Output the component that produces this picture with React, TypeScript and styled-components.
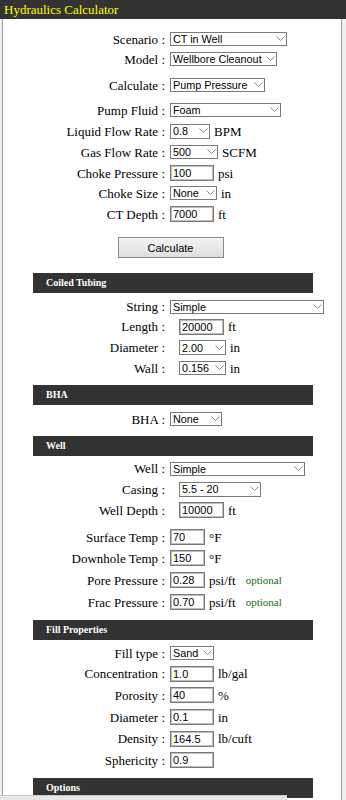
import React from 'react';
import styled, { createGlobalStyle } from 'styled-components';

const GlobalStyle = createGlobalStyle`
  html, body { margin: 0; padding: 0; background: #f0f0f0; }
  body { font-family: "Liberation Serif", "Times New Roman", serif; color: #000; }
`;

const Page = styled.div`
  width: 346px;
`;

const TitleBar = styled.div`
  height: 19px;
  box-sizing: border-box;
  background: #333333;
  color: #ffff00;
  font: 13px/19px "Liberation Serif", "Times New Roman", serif;
  padding-left: 4px;
  white-space: nowrap;
`;

const Panel = styled.div`
  margin-left: 2px;
  width: 340px;
  box-sizing: border-box;
  background: #ffffff;
  border-left: 1px solid #a0a0a0;
  border-right: 1px solid #a0a0a0;
  padding: 10px 0 40px;
  display: flex;
  flex-direction: column;
`;

const Row = styled.div<{ $h?: number; $mt?: number }>`
  display: grid;
  grid-template-columns: 162px auto;
  column-gap: 5px;
  align-items: center;
  height: ${(p) => p.$h ?? 21}px;
  margin-top: ${(p) => p.$mt ?? 0}px;
`;

const Label = styled.label`
  text-align: right;
  font-size: 13px;
  line-height: 15px;
  white-space: nowrap;
`;

const Controls = styled.div<{ $indent?: boolean }>`
  display: flex;
  align-items: center;
  padding-left: ${(p) => (p.$indent ? 9 : 0)}px;
  white-space: nowrap;
`;

const Unit = styled.span`
  margin-left: 4px;
  font-size: 13px;
  line-height: 15px;
`;

const Optional = styled.span`
  margin-left: 10px;
  font-size: 11px;
  line-height: 13px;
  color: #136b13;
`;

const SelectWrap = styled.span<{ $w: number; $h?: number }>`
  position: relative;
  display: inline-block;
  width: ${(p) => p.$w}px;
  height: ${(p) => p.$h ?? 14}px;
`;

const NativeSelect = styled.select`
  appearance: none;
  -webkit-appearance: none;
  display: block;
  width: 100%;
  height: 100%;
  box-sizing: border-box;
  margin: 0;
  border: 1px solid #7a7a7a;
  border-radius: 0;
  background: #ffffff;
  color: #000;
  font: 10.8px/12px "Liberation Sans", Arial, sans-serif;
  padding: 0 8px 0 2px;
  outline: none;
`;

const Chevron = styled.svg`
  position: absolute;
  right: 2px;
  top: 50%;
  margin-top: -3px;
  width: 9px;
  height: 5px;
  pointer-events: none;
`;

const TextInput = styled.input<{ $w?: number }>`
  width: ${(p) => p.$w ?? 44}px;
  height: 16px;
  box-sizing: border-box;
  margin: 0;
  border: 1px solid #7a7a7a;
  box-shadow: inset 0 0 0 1px #bdbdbd;
  border-radius: 0;
  padding: 0 2px;
  background: #fff;
  color: #000;
  font: 11px/12px "Liberation Sans", Arial, sans-serif;
  outline: none;
`;

const ButtonRow = styled.div`
  display: flex;
  justify-content: center;
  padding-right: 3px;
  margin-top: 13px;
`;

const Button = styled.button`
  width: 106px;
  height: 21px;
  box-sizing: border-box;
  margin: 0;
  border: 1px solid #8a8a8a;
  border-radius: 0;
  background: linear-gradient(#f3f3f3, #dedede);
  color: #000;
  font: 11px "Liberation Sans", Arial, sans-serif;
  padding: 0;
`;

const SectionBar = styled.div<{ $mt?: number }>`
  margin: ${(p) => p.$mt ?? 7}px 0 0 30px;
  width: 280px;
  height: 20px;
  box-sizing: border-box;
  background: #333333;
  color: #ffffff;
  font: bold 10px/20px "Liberation Serif", "Times New Roman", serif;
  padding-left: 13px;
`;

const ScrollThumb = styled.div`
  position: fixed;
  left: 0;
  bottom: 0;
  width: 287px;
  height: 4px;
  background: #e6e6e6;
  border-top: 1px solid #c9c9c9;
`;

type SelectProps = { w: number; h?: number; value: string; options?: string[] };

function Select({ w, h, value, options }: SelectProps) {
  const opts = options ?? [value];
  return (
    <SelectWrap $w={w} $h={h}>
      <NativeSelect defaultValue={value}>
        {opts.map((o) => (
          <option key={o}>{o}</option>
        ))}
      </NativeSelect>
      <Chevron viewBox="0 0 9 5">
        <path d="M0.5 0.5 L4.5 4.5 L8.5 0.5" fill="none" stroke="#8a8a8a" strokeWidth="1" />
      </Chevron>
    </SelectWrap>
  );
}

type FieldProps = {
  label: string;
  h?: number;
  mt?: number;
  indent?: boolean;
  unit?: string;
  optional?: boolean;
  children: React.ReactNode;
};

function Field({ label, h, mt, indent, unit, optional, children }: FieldProps) {
  return (
    <Row $h={h} $mt={mt}>
      <Label>{label} :</Label>
      <Controls $indent={indent}>
        {children}
        {unit && <Unit>{unit}</Unit>}
        {optional && <Optional>optional</Optional>}
      </Controls>
    </Row>
  );
}

export default function App() {
  return (
    <Page>
      <GlobalStyle />
      <TitleBar>Hydraulics Calculator</TitleBar>
      <Panel>
        <Field label="Scenario" h={20}>
          <Select w={117} value="CT in Well" options={['CT in Well', 'CT in Pipe']} />
        </Field>
        <Field label="Model" h={20}>
          <Select w={107} value="Wellbore Cleanout" />
        </Field>
        <Field label="Calculate" h={20} mt={6}>
          <Select w={95} value="Pump Pressure" />
        </Field>
        <Field label="Pump Fluid" h={20} mt={5}>
          <Select w={111} value="Foam" />
        </Field>
        <Field label="Liquid Flow Rate" h={20} mt={1} unit="BPM">
          <Select w={40} h={15} value="0.8" />
        </Field>
        <Field label="Gas Flow Rate" h={20} mt={1} unit="SCFM">
          <Select w={48} value="500" />
        </Field>
        <Field label="Choke Pressure" h={20} mt={1} unit="psi">
          <TextInput defaultValue="100" />
        </Field>
        <Field label="Choke Size" h={20} unit="in">
          <Select w={47} value="None" />
        </Field>
        <Field label="CT Depth" h={20} mt={1} unit="ft">
          <TextInput defaultValue="7000" />
        </Field>
        <ButtonRow>
          <Button type="button">Calculate</Button>
        </ButtonRow>

        <SectionBar $mt={15}>Coiled Tubing</SectionBar>
        <Field label="String" h={19} mt={4}>
          <Select w={154} value="Simple" />
        </Field>
        <Field label="Length" h={21} indent unit="ft">
          <TextInput $w={45} defaultValue="20000" />
        </Field>
        <Field label="Diameter" h={21} indent unit="in">
          <Select w={47} h={15} value="2.00" />
        </Field>
        <Field label="Wall" h={20} indent unit="in">
          <Select w={47} value="0.156" />
        </Field>

        <SectionBar>BHA</SectionBar>
        <Field label="BHA" h={20} mt={4}>
          <Select w={52} value="None" />
        </Field>

        <SectionBar>Well</SectionBar>
        <Field label="Well" h={21} mt={2}>
          <Select w={135} value="Simple" />
        </Field>
        <Field label="Casing" h={20} indent>
          <Select w={82} h={15} value="5.5 - 20" />
        </Field>
        <Field label="Well Depth" h={22} indent unit="ft">
          <TextInput $w={45} defaultValue="10000" />
        </Field>
        <Field label="Surface Temp" h={22} mt={5} unit="°F">
          <TextInput $w={35} defaultValue="70" />
        </Field>
        <Field label="Downhole Temp" h={20} unit="°F">
          <TextInput $w={35} defaultValue="150" />
        </Field>
        <Field label="Pore Pressure" h={22} mt={1} unit="psi/ft" optional>
          <TextInput $w={35} defaultValue="0.28" />
        </Field>
        <Field label="Frac Pressure" h={22} unit="psi/ft" optional>
          <TextInput $w={35} defaultValue="0.70" />
        </Field>

        <SectionBar>Fill Properties</SectionBar>
        <Field label="Fill type" h={22} mt={2}>
          <Select w={44} value="Sand" />
        </Field>
        <Field label="Concentration" h={19} unit="lb/gal">
          <TextInput defaultValue="1.0" />
        </Field>
        <Field label="Porosity" h={22} mt={1} unit="%">
          <TextInput defaultValue="40" />
        </Field>
        <Field label="Diameter" h={22} unit="in">
          <TextInput defaultValue="0.1" />
        </Field>
        <Field label="Density" h={21} unit="lb/cuft">
          <TextInput defaultValue="164.5" />
        </Field>
        <Field label="Sphericity" h={22}>
          <TextInput defaultValue="0.9" />
        </Field>

        <SectionBar>Options</SectionBar>
      </Panel>
      <ScrollThumb />
    </Page>
  );
}
